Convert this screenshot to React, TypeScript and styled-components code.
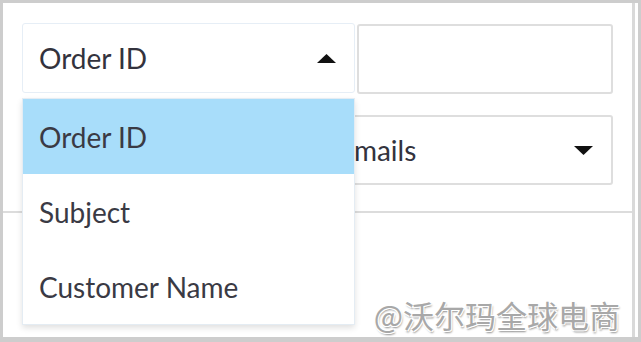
import React from "react";
import styled, { createGlobalStyle } from "styled-components";

const GlobalStyle = createGlobalStyle`
  html, body {
    margin: 0;
    padding: 0;
    background: #ffffff;
  }
  body {
    font-family: Lato, "Noto Sans", sans-serif;
  }
`;

const searchFields = ["Order ID", "Subject", "Customer Name"];

function Caret({ up }: { up?: boolean }) {
  return (
    <CaretSvg width="19" height="9" viewBox="0 0 19 9">
      {up ? (
        <polygon points="0,9 9.5,0 19,9" fill="#111" />
      ) : (
        <polygon points="0,0 9.5,9 19,0" fill="#111" />
      )}
    </CaretSvg>
  );
}

function App() {
  return (
    <>
      <GlobalStyle />
      <Frame>
        <Panel>
          <FilterArea>
            <FilterRow>
              <SearchSelect>
                <SelectText>Order ID</SelectText>
                <Caret up />
              </SearchSelect>
              <SearchInput />
            </FilterRow>
            <FilterRow>
              <MailSelect>
                <SelectText>Customer Service Team Emails</SelectText>
                <Caret />
              </MailSelect>
            </FilterRow>
          </FilterArea>
          <ResultArea />

          <Menu>
            {searchFields.map((field, i) => (
              <MenuItem key={field} $active={i === 0}>
                {field}
              </MenuItem>
            ))}
          </Menu>
        </Panel>
        <Watermark>@沃尔玛全球电商</Watermark>
      </Frame>
    </>
  );
}

export default App;

const Frame = styled.div`
  position: relative;
  box-sizing: border-box;
  width: 641px;
  height: 342px;
  border-style: solid;
  border-color: #cdcdcd;
  border-width: 3px 3px 5px 3px;
  background: #ffffff;
  overflow: hidden;
`;

const Panel = styled.div`
  position: relative;
  box-sizing: border-box;
  width: 632px;
  height: 100%;
  border-right: 3px solid #d9d9d9;
`;

const FilterArea = styled.div`
  box-sizing: border-box;
  height: 210px;
  padding: 19px 19px 0 19px;
  display: flex;
  flex-direction: column;
  gap: 21px;
  border-bottom: 2px solid #dcdcdc;
`;

const FilterRow = styled.div`
  display: flex;
  align-items: center;
  gap: 2px;
`;

const SelectBase = styled.div`
  box-sizing: border-box;
  height: 70px;
  display: flex;
  align-items: center;
  justify-content: space-between;
  padding: 0 18px 0 16px;
  border-radius: 3px;
  background: #ffffff;
  overflow: hidden;
`;

const SearchSelect = styled(SelectBase)`
  width: 333px;
  border: 1px solid #e6eef6;
`;

const MailSelect = styled(SelectBase)`
  width: 591px;
  padding-left: 20px;
  border: 2px solid #dedede;
`;

const SearchInput = styled.div`
  box-sizing: border-box;
  width: 256px;
  height: 70px;
  margin-top: 2px;
  border: 2px solid #dedede;
  border-radius: 3px;
`;

const SelectText = styled.span`
  font-family: Lato, "Noto Sans", sans-serif;
  font-size: 28px;
  color: #33333d;
  white-space: nowrap;
`;

const CaretSvg = styled.svg`
  flex: none;
  display: block;
`;

const ResultArea = styled.div`
  flex: 1;
`;

const Menu = styled.div`
  position: absolute;
  left: 19px;
  top: 95px;
  width: 333px;
  box-sizing: border-box;
  border: 1px solid #e4ecf3;
  background: #ffffff;
  box-shadow: 0 3px 6px rgba(0, 0, 0, 0.12);
`;

const MenuItem = styled.div<{ $active?: boolean }>`
  height: 75px;
  display: flex;
  align-items: center;
  padding: 0 16px;
  font-family: Lato, "Noto Sans", sans-serif;
  font-size: 28px;
  color: #3a3a44;
  background: ${(p) => (p.$active ? "#a8ddfa" : "#ffffff")};
`;

const Watermark = styled.div`
  position: absolute;
  right: 18px;
  bottom: 2px;
  font-family: "Noto Sans CJK SC", "Noto Sans", sans-serif;
  font-size: 31px;
  line-height: 40px;
  color: #a8a8a8;
  text-shadow: -1px -1px 0 #fff, 1px -1px 0 #fff, -1px 1px 0 #fff,
    1px 1px 0 #fff, 1px 2px 2px rgba(0, 0, 0, 0.45);
  white-space: nowrap;
`;
